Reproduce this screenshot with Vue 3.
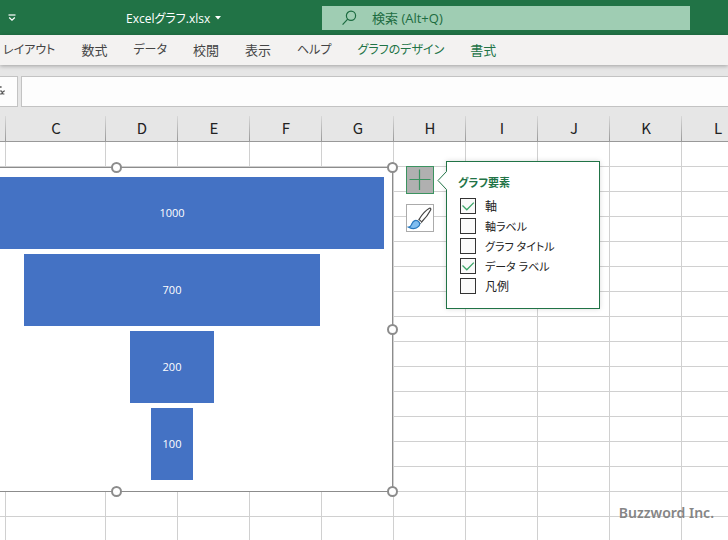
<script setup>
import { ref } from 'vue'

const tabs = [
  { label: 'レイアウト', kana: true },
  { label: '数式' },
  { label: 'データ', kana: true },
  { label: '校閲' },
  { label: '表示' },
  { label: 'ヘルプ', kana: true },
  { label: 'グラフのデザイン', kana: true, context: true },
  { label: '書式', context: true },
]

const columns = 'CDEFGHIJKL'.split('')
const rowCount = 40

const funnel = [1000, 700, 200, 100]
const peak = Math.max(...funnel)

const handles = ['n', 'ne', 'e', 'se', 's']

const elements = ref([
  { id: 'axis', label: '軸', on: true },
  { id: 'axis-label', label: '軸ラベル', kana: true, on: false },
  { id: 'chart-title', label: 'グラフ タイトル', kana: true, on: false },
  { id: 'data-label', label: 'データ ラベル', kana: true, on: true },
  { id: 'legend', label: '凡例', on: false },
])
</script>

<template>
  <div class="app">
    <header class="titlebar">
      <button class="quick" type="button" aria-label="クイック アクセス">
        <svg width="8" height="8" viewBox="0 0 8 8">
          <path d="M0.5 1H7.5" stroke="#fff" stroke-width="1.2" />
          <path d="M1.2 3.6L4 6.2L6.8 3.6" fill="none" stroke="#fff" stroke-width="1.3" />
        </svg>
      </button>
      <button class="filename" type="button">
        <span>Excelグラフ.xlsx</span>
        <svg width="6" height="4" viewBox="0 0 6 4"><path d="M0 0H6L3 3.5Z" fill="#fff" /></svg>
      </button>
      <label class="search">
        <svg width="16" height="16" viewBox="0 0 16 16" fill="none" stroke="#1c6b40" stroke-width="1.2">
          <circle cx="9" cy="5.8" r="4.6" />
          <path d="M5.7 9.1L0.6 14.6" />
        </svg>
        <input type="text" placeholder="検索 (Alt+Q)" aria-label="検索" />
      </label>
    </header>

    <nav class="tabs">
      <button
        v-for="t in tabs"
        :key="t.label"
        type="button"
        class="tab"
        :class="{ context: t.context, kana: t.kana }"
      >{{ t.label }}</button>
    </nav>

    <div class="formula">
      <button class="fx" type="button" aria-label="関数の挿入">
        <svg width="6" height="14" viewBox="0 0 6 14" fill="none" stroke="#555">
          <path d="M0 2H1.6" stroke-width="1.6" />
          <path d="M0 6H1.5L2.8 9H4.4M4.8 5.8L3.4 6.4L1.4 9H0" stroke-width="1.2" />
        </svg>
      </button>
      <input class="formula-input" type="text" aria-label="数式バー" />
    </div>

    <main class="sheet">
      <table class="grid">
        <colgroup>
          <col class="col-edge" />
          <col v-for="c in columns" :key="c" :class="c === 'C' ? 'col-wide' : 'col'" />
        </colgroup>
        <thead>
          <tr>
            <th></th>
            <th v-for="c in columns" :key="c" scope="col">{{ c }}</th>
          </tr>
        </thead>
        <tbody>
          <tr v-for="r in rowCount" :key="r">
            <td></td>
            <td v-for="c in columns" :key="c"></td>
          </tr>
        </tbody>
      </table>

      <section class="chart" aria-label="じょうごグラフ">
        <div class="bars">
          <div v-for="v in funnel" :key="v" class="bar" :style="{ width: (v / peak) * 100 + '%' }">{{ v }}</div>
        </div>
        <i v-for="h in handles" :key="h" class="handle" :class="h"></i>
      </section>

      <div class="tools">
        <button class="tool active" type="button" aria-label="グラフ要素">
          <svg width="26" height="26" viewBox="0 0 26 26">
            <path d="M2.5 12.5H23.5M12.5 2.5V23" stroke="#3b9360" stroke-width="1.2" />
          </svg>
        </button>
        <button class="tool" type="button" aria-label="グラフ スタイル">
          <svg width="26" height="26" viewBox="0 0 26 26">
            <path d="M12 14.5C15 9.5 19 5.2 22.4 3.3C23.6 2.8 24.2 3.8 23.6 5C21.6 9 18.2 13.4 14.6 17Z" fill="#fff" stroke="#444" stroke-width="1.2" />
            <path d="M11.8 14.6L14.7 17.2L13.6 18.6L10.4 15.8Z" fill="#fff" stroke="#555" stroke-width="0.8" />
            <path d="M1.6 22.2C3.8 22 4.2 20.4 5 18.6C6 16 8.4 14.8 10.4 15.8C13 17 13.4 19.4 11.6 21.4C9.2 24 5 24 1.6 22.2Z" fill="#7fbdf0" stroke="#2878bd" stroke-width="1.2" />
          </svg>
        </button>
      </div>

      <fieldset class="panel">
        <svg class="pointer" width="10" height="19" viewBox="0 0 10 19">
          <path d="M10 0L1 9.5L10 19Z" fill="#fff" />
          <path d="M9.5 0.5L1 9.5L9.5 18.5" fill="none" stroke="#217346" />
        </svg>
        <h2>グラフ要素</h2>
        <label v-for="e in elements" :key="e.id" class="option" :for="e.id">
          <span class="tick">
            <input :id="e.id" v-model="e.on" type="checkbox" />
            <svg v-if="e.on" width="14" height="14" viewBox="0 0 14 14">
              <path d="M1.5 6.5L5.8 10.8L12.8 3.6" fill="none" stroke="#3ba568" stroke-width="1.3" />
            </svg>
          </span>
          <span :class="{ kana: e.kana }">{{ e.label }}</span>
        </label>
      </fieldset>

      <p class="credit">Buzzword Inc.</p>
    </main>
  </div>
</template>

<style>
body {
  margin: 0;
}
</style>

<style scoped>
.app {
  display: flex;
  flex-direction: column;
  height: 100vh;
  overflow: hidden;
  background: #e6e6e6;
  color: #222;
  font-family: "Open Sans", "Noto Sans CJK JP", sans-serif;
  font-size: 13px;
  font-feature-settings: "palt";
}

button,
input {
  box-sizing: border-box;
  margin: 0;
  padding: 0;
  border: 0;
  background: none;
  color: inherit;
  font: inherit;
  font-feature-settings: inherit;
}

svg {
  display: block;
  flex: none;
}

.titlebar {
  display: flex;
  align-items: center;
  flex: none;
  height: 35px;
  padding: 0 38px 0 8px;
  background: #217346;
  color: #fff;
}

.quick {
  display: flex;
  align-items: center;
  width: 118px;
  height: 24px;
}

.filename {
  display: flex;
  align-items: center;
  gap: 5px;
  width: 196px;
  font-size: 12px;
  white-space: nowrap;
}

.search {
  display: flex;
  align-items: center;
  gap: 14px;
  flex: 1;
  min-width: 0;
  height: 24px;
  padding-left: 20px;
  background: #9fcdb3;
}

.search input {
  flex: 1;
  min-width: 0;
  height: 24px;
  font-size: 13px;
}

.search input::placeholder {
  color: #1c6b40;
  opacity: 1;
}

.tabs {
  display: flex;
  align-items: center;
  gap: 26px;
  box-sizing: border-box;
  flex: none;
  height: 30px;
  padding: 0 0 2px 3px;
  background: #f3f2f1;
  color: #444;
  box-shadow: 0 1px 4px rgba(0, 0, 0, 0.3);
}

.tab {
  white-space: nowrap;
}

.tab.kana {
  font-size: 12px;
}

.tab.context {
  color: #217346;
}

.formula {
  display: flex;
  gap: 3px;
  flex: none;
  padding-top: 11px;
}

.fx {
  width: 18px;
  height: 31px;
  border: 1px solid #c3c3c3;
  border-left: 0;
  background: #fdfdfd;
}

.formula-input {
  flex: 1;
  min-width: 0;
  height: 31px;
  padding: 0 8px;
  border: 1px solid #c3c3c3;
  border-right: 0;
  background: #fdfdfd;
}

.sheet {
  position: relative;
  flex: 1;
  min-height: 0;
  overflow: hidden;
}

.grid {
  width: max-content;
  table-layout: fixed;
  border-collapse: separate;
  border-spacing: 0;
  background: #fff;
}

.col-edge {
  width: 6px;
}

.col-wide {
  width: 100px;
}

.col {
  width: 72px;
}

.grid th {
  box-sizing: border-box;
  height: 35px;
  padding: 8px 0 1px;
  border-bottom: 1px solid #999;
  background: linear-gradient(to bottom, #d8d8d8, #999) right bottom / 1px 25px no-repeat #e6e6e6;
  color: #222;
  font-family: "Noto Sans CJK JP", sans-serif;
  font-size: 15px;
  font-weight: 400;
  line-height: 24px;
}

.grid td {
  box-sizing: border-box;
  height: 25px;
  padding: 0;
  border-right: 1px solid #d0d0d0;
  border-bottom: 1px solid #d0d0d0;
}

.chart {
  position: absolute;
  top: 60px;
  left: -160px;
  box-sizing: border-box;
  width: 553px;
  padding: 9px 8px 11px 119px;
  border: 1px solid #8c8c8c;
  background: #fff;
}

.bars {
  display: flex;
  flex-direction: column;
  align-items: center;
  gap: 5px;
}

.bar {
  height: 72px;
  background: #4472c4;
  color: #fff;
  font-size: 11px;
  line-height: 72px;
  text-align: center;
}

.handle {
  position: absolute;
  box-sizing: border-box;
  width: 11px;
  height: 11px;
  border: 2px solid #8c8c8c;
  border-radius: 50%;
  background: #fff;
}

.n,
.ne {
  top: -6px;
}

.s,
.se {
  bottom: -6px;
}

.n,
.s {
  left: calc(50% - 6px);
}

.ne,
.e,
.se {
  right: -6px;
}

.e {
  top: calc(50% - 6px);
}

.tools {
  position: absolute;
  top: 59px;
  left: 406px;
  display: flex;
  flex-direction: column;
  gap: 10px;
}

.tool {
  width: 28px;
  height: 28px;
  border: 1px solid #ababab;
  background: #fff;
}

.tool.active {
  border-color: #3b9360;
  background: #b0b0b0;
}

.panel {
  position: absolute;
  top: 54px;
  left: 446px;
  box-sizing: border-box;
  width: 154px;
  margin: 0;
  padding: 12px 11px;
  border: 1px solid #217346;
  background: #fff;
  box-shadow: 0 0 5px rgba(0, 0, 0, 0.15);
  font-size: 12px;
}

.pointer {
  position: absolute;
  top: 9px;
  left: -10px;
}

.panel h2 {
  margin: 0 0 4px;
  color: #217346;
  font-size: 11px;
  font-weight: 700;
  line-height: 18px;
}

.option {
  display: flex;
  align-items: center;
  gap: 9px;
  height: 20px;
  padding-left: 2px;
  white-space: nowrap;
}

.option .kana {
  font-size: 11px;
}

.tick {
  display: grid;
}

.tick input {
  grid-area: 1 / 1;
  appearance: none;
  width: 16px;
  height: 16px;
  border: 1px solid #333;
  background: #fafafa;
}

.tick svg {
  grid-area: 1 / 1;
  place-self: center;
  pointer-events: none;
}

.credit {
  position: absolute;
  right: 14px;
  bottom: 17px;
  margin: 0;
  color: #858585;
  font-family: "Noto Sans", sans-serif;
  font-size: 14px;
  font-weight: 600;
  line-height: 20px;
}
</style>
